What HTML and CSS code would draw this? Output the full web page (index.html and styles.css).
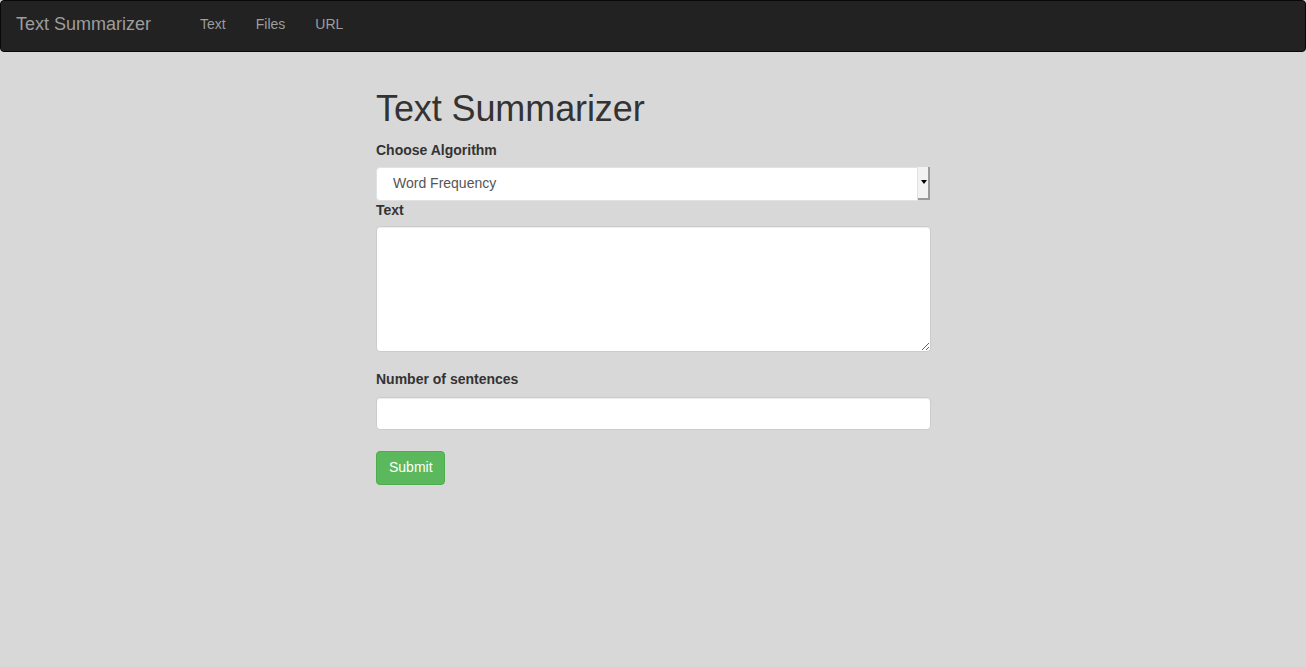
FILE: index.html
```html
<!DOCTYPE html>
<html>
<head>
<meta charset="utf-8">
<title>Text Summarizer</title>
<link rel="stylesheet" href="styles.css">
</head>
<body>
<nav class="navbar">
  <a class="brand" href="#">Text Summarizer</a>
  <ul class="nav">
    <li><a href="#">Text</a></li>
    <li><a href="#">Files</a></li>
    <li><a href="#">URL</a></li>
  </ul>
</nav>
<main class="container">
  <h1 class="title">Text Summarizer</h1>
  <form class="form">
    <div class="group">
      <label class="label label-first">Choose Algorithm</label>
      <div class="select-wrap">
        <select class="control select">
          <option>Word Frequency</option>
        </select>
        <span class="select-btn"><span class="caret"></span></span>
      </div>
    </div>
    <div class="group">
      <label class="label">Text</label>
      <textarea class="control textarea"></textarea>
    </div>
    <div class="group group-num">
      <label class="label label-num">Number of sentences</label>
      <input class="control control-num" type="text">
    </div>
    <button class="btn" type="button">Submit</button>
  </form>
</main>
</body>
</html>
```

FILE: styles.css
```css
* { box-sizing: border-box; }
html, body { margin: 0; padding: 0; }
body {
  background: #d8d8d8;
  font-family: "Liberation Sans", Arial, sans-serif;
  font-size: 14px;
  line-height: 1.42857;
  color: #333;
  min-height: 667px;
}
.navbar {
  display: flex;
  align-items: flex-start;
  height: 52px;
  background: #222;
  border: 1px solid #080808;
  border-radius: 4px;
  padding: 0 15px;
  margin-bottom: 20px;
}
.brand {
  font-size: 18px;
  line-height: 20px;
  color: #9d9d9d;
  text-decoration: none;
  padding: 13px 0 17px;
}
.nav {
  display: flex;
  list-style: none;
  margin: 0 0 0 34px;
  padding: 0;
}
.nav a {
  display: block;
  padding: 13px 15px 17px;
  line-height: 20px;
  color: #9d9d9d;
  text-decoration: none;
}
.container {
  width: 555px;
  margin: 0 auto;
  padding-top: 17px;
  position: relative;
  left: 0.5px;
}
.title {
  font-size: 36px;
  font-weight: 500;
  line-height: 1.1;
  margin: 0 0 12px;
  color: #333;
  letter-spacing: -0.1px;
}
.form { margin: 0; }
.group { margin: 0; }
.label {
  display: inline-block;
  font-weight: bold;
  margin-bottom: 5px;
  max-width: 100%;
}
.label-first { margin-bottom: 6px; }
.label-num { margin-bottom: 7px; }
.control {
  display: block;
  width: 100%;
  height: 34px;
  padding: 6px 12px;
  font-family: inherit;
  font-size: 14px;
  line-height: 1.42857;
  color: #555;
  background: #fff;
  border: 1px solid #ccc;
  border-radius: 4px;
  box-shadow: inset 0 1px 1px rgba(0,0,0,0.075);
  margin: 0;
}
.select-wrap { position: relative; }
.select {
  appearance: none;
  -webkit-appearance: none;
  padding-left: 16px;
  border: 1px solid #e2e2e2;
  border-radius: 4px 0 0 4px;
  width: 542px;
  height: 34px;
  box-shadow: none;
}
.select-btn {
  position: absolute;
  left: 542px;
  top: 0;
  width: 12px;
  height: 33px;
  background: #f2f2f2;
  border-right: 2px solid #9a9a9a;
  border-bottom: 2px solid #9a9a9a;
  display: flex;
  align-items: center;
  justify-content: center;
}
.caret {
  width: 0;
  height: 0;
  border-left: 3px solid transparent;
  border-right: 3px solid transparent;
  border-top: 4px solid #000;
  margin-left: 1px;
}
.textarea {
  height: 126px;
  resize: vertical;
}
.group-num { margin-top: 18px; margin-bottom: 21px; }
.control-num { height: 33px; }
.btn {
  display: inline-block;
  padding: 6px 12px;
  font-family: inherit;
  font-size: 14px;
  line-height: 1.42857;
  color: #fff;
  background: #5cb85c;
  border: 1px solid #4cae4c;
  border-radius: 4px;
  cursor: pointer;
  height: 34px;
  width: 69px;
}
```
